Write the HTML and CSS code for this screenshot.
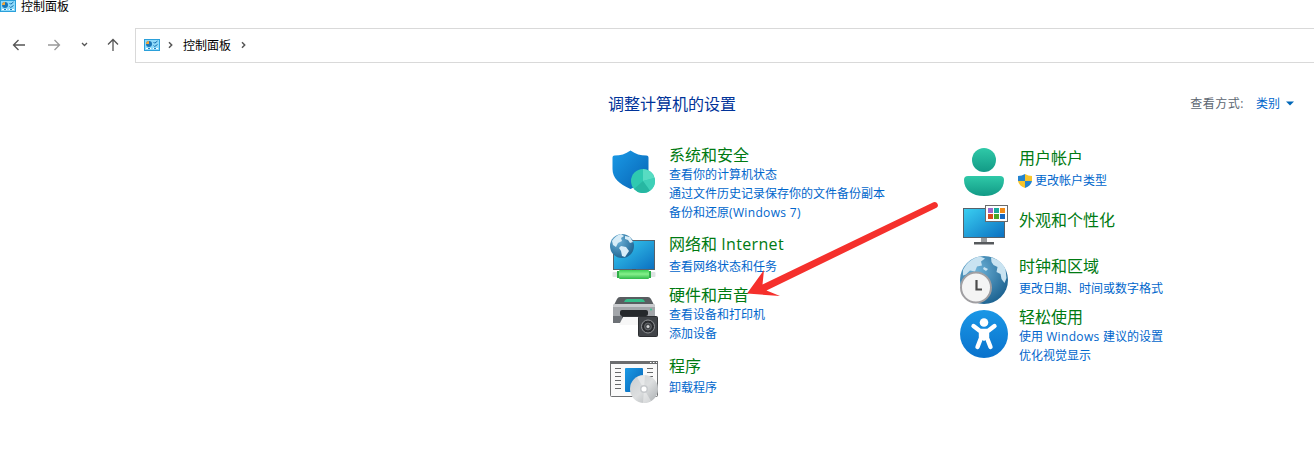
FILE: index.html
```html
<!DOCTYPE html>
<html lang="zh-CN">
<head>
    <meta charset="UTF-8">
    <meta name="viewport" content="width=device-width, initial-scale=1.0">
    <title>控制面板</title>
    <link rel="stylesheet" href="styles.css">
</head>
<body>
    <svg class="defs" width="0" height="0">
        <defs>
            <linearGradient id="blue" x1="0" y1="0" x2="1" y2="1">
                <stop offset="0" stop-color="#1a9ae6"/>
                <stop offset="1" stop-color="#0763b4"/>
            </linearGradient>
            <linearGradient id="round-blue" x1="0" y1="0" x2="0" y2="1">
                <stop offset="0" stop-color="#1a97e6"/>
                <stop offset="1" stop-color="#0a72cc"/>
            </linearGradient>
            <linearGradient id="screen" x1="0" y1="0" x2="1" y2="1">
                <stop offset="0" stop-color="#3ad0f2"/>
                <stop offset="1" stop-color="#0b6fc0"/>
            </linearGradient>
            <linearGradient id="teal" x1="0" y1="0" x2="0" y2="1">
                <stop offset="0" stop-color="#2fc9a8"/>
                <stop offset="1" stop-color="#129a86"/>
            </linearGradient>
            <linearGradient id="cable" x1="0" y1="0" x2="0" y2="1">
                <stop offset="0" stop-color="#3fce55"/>
                <stop offset=".45" stop-color="#86f08c"/>
                <stop offset="1" stop-color="#2fb94a"/>
            </linearGradient>
            <radialGradient id="globe" cx=".35" cy=".3" r=".75">
                <stop offset="0" stop-color="#6db2d8"/>
                <stop offset="1" stop-color="#1d6391"/>
            </radialGradient>
            <linearGradient id="disc" x1="0" y1="0" x2="1" y2="1">
                <stop offset="0" stop-color="#c9cdd0"/>
                <stop offset=".5" stop-color="#dddfe0"/>
                <stop offset="1" stop-color="#a9adb0"/>
            </linearGradient>
            <symbol id="panel" viewBox="0 0 16 12">
                <rect x=".5" y=".5" width="15" height="11" fill="#8fdafa" stroke="#2ba0da"/>
                <circle cx="5" cy="5" r="3" fill="#1976b8"/>
                <path d="M5 5V2a3 3 0 0 0-3 3z" fill="#f3a73b"/>
                <path d="M9.500 3l1.200 1.200L13.500 2M9.500 6.500l1.200 1L13.500 5.500" fill="none" stroke="#176fae"/>
                <path d="M2 9.500h5M9 9.500h5" stroke="#fff"/>
                <path d="M4 9.500h2M10 9.500h2" stroke="#1b83c4"/>
            </symbol>
        </defs>
    </svg>

    <header class="title-bar">
        <svg class="panel-icon" width="16" height="12"><use href="#panel"/></svg>
        <span>控制面板</span>
    </header>

    <div class="toolbar">
        <nav class="nav-buttons">
            <svg width="14" height="14" viewBox="0 0 14 14"><path d="M13 7H1.500M6.500 2l-5 5 5 5"/></svg>
            <svg class="disabled" width="14" height="14" viewBox="0 0 14 14"><path d="M1 7h11.500M7.500 2l5 5-5 5"/></svg>
            <svg class="recent" width="7" height="5" viewBox="0 0 7 5"><path d="M1 1l2.500 2.500L6 1"/></svg>
            <svg class="up" width="14" height="14" viewBox="0 0 14 14"><path d="M7 13V1.500M2 6.500l5-5 5 5"/></svg>
        </nav>
        <div class="address">
            <svg width="16" height="12"><use href="#panel"/></svg>
            <svg class="chevron" width="5" height="8" viewBox="0 0 5 8"><path d="M1 1.300L3.700 4 1 6.700"/></svg>
            <span>控制面板</span>
            <svg class="chevron last" width="5" height="8" viewBox="0 0 5 8"><path d="M1 1.300L3.700 4 1 6.700"/></svg>
        </div>
    </div>

    <main class="content">
        <div class="heading-row">
            <h1>调整计算机的设置</h1>
            <div class="view-by">
                <span class="view-label">查看方式:</span>
                <a class="view-mode">类别</a>
                <svg width="8" height="5" viewBox="0 0 8 5"><path d="M0 .500h8L4 4.500z" fill="#0067b8"/></svg>
            </div>
        </div>

        <div class="categories">
            <div class="column">
                <section class="category system">
                    <svg class="icon" viewBox="0 0 48 48">
                        <path d="M20.500 2.500c5 3.700 10 5 16 5q2 0 2 2V21c0 9-6 15-18 20C9 36 2.500 30 2.500 21V9.500q0-2 2-2c6 0 11-1.300 16-5z" fill="url(#blue)"/>
                        <circle cx="33" cy="33" r="12" fill="#2fc9b0"/>
                        <path d="M33 21a12 12 0 0 1 11.500 9L33 33z" fill="#58dcc2"/>
                        <path d="M33 33l11.500-3A12 12 0 0 1 40 42.700z" fill="#3fd0b8"/>
                        <path d="M33 33l7 9.700A12 12 0 0 1 24 41z" fill="#27b7a2"/>
                    </svg>
                    <div class="text">
                        <h2>系统和安全</h2>
                        <a>查看你的计算机状态</a>
                        <a>通过文件历史记录保存你的文件备份副本</a>
                        <a>备份和还原<span class="latin">(Windows 7)</span></a>
                    </div>
                </section>

                <section class="category network">
                    <svg class="icon" viewBox="0 0 48 48">
                        <rect x="3.500" y="7.500" width="41" height="29" fill="url(#screen)" stroke="#56616a"/>
                        <path d="M24 36v3" stroke="#555" stroke-width="4"/>
                        <rect x="2.500" y="39" width="43" height="5" rx="1" fill="#dfe3e3"/>
                        <rect x="7" y="38" width="34" height="7" fill="#2fae48"/>
                        <rect x="9" y="37" width="30" height="9" rx="1" fill="url(#cable)"/>
                        <circle cx="12" cy="13" r="12" fill="url(#globe)"/>
                        <path d="M2 8c2-3 5-6 9-7l3 2-3 2 1 3-4 2-2 4-3-2zM15 3l5 1 3 5-3 1-2-3-3-1zM11 13l5 1 3 4-4 6-3-1-1-5-2-3z" fill="#d8edf8"/>
                    </svg>
                    <div class="text">
                        <h2>网络和 <span class="latin">Internet</span></h2>
                        <a>查看网络状态和任务</a>
                    </div>
                </section>

                <section class="category hardware">
                    <svg class="icon" viewBox="0 0 48 48">
                        <path d="M10 5h28q2 0 3 2l4 8H3l4-8q1-2 3-2z" fill="#595d61"/>
                        <path d="M17 7h15q2 0 3 3H14q1-3 3-3z" fill="#36bd8a"/>
                        <path d="M3 14q0-2 2-2h38q2 0 2 2v17H3z" fill="#a3a6aa"/>
                        <path d="M3 14q0-2 2-2h38q2 0 2 2v1H3z" fill="#c9cbce"/>
                        <path d="M3 24h42v7H3z" fill="#6d7176"/>
                        <rect x="10" y="18" width="28" height="6" rx="2" fill="#25282b"/>
                        <path d="M12 24h24v6H12z" fill="#34373b"/>
                        <path d="M13 25h22v8H9z" fill="#f7f7f7"/>
                        <circle cx="41" cy="17.500" r="1" fill="#35c88e"/>
                        <rect x="28.500" y="24.500" width="19" height="20" rx="1" fill="#414448" stroke="#2c2e31"/>
                        <circle cx="38" cy="34.500" r="6.500" fill="#292b2e" stroke="#929497"/>
                        <circle cx="38" cy="34.500" r="3.500" fill="#45484b" stroke="#77797c" stroke-width=".7"/>
                        <circle cx="38" cy="34.500" r="1.500" fill="#d5d6d8"/>
                    </svg>
                    <div class="text">
                        <h2>硬件和声音</h2>
                        <a>查看设备和打印机</a>
                        <a>添加设备</a>
                    </div>
                </section>

                <section class="category programs">
                    <svg class="icon" viewBox="0 0 48 48">
                        <rect x=".5" y="4.500" width="47" height="35" rx="1" fill="#fafafa" stroke="#6f7173"/>
                        <path d="M0 4h48v3H0z" fill="#6b6d6f"/>
                        <path d="M40 5.500h1.500M43 5.500h1.500M46 5.500h1" stroke="#fff"/>
                        <path d="M5 11.500h6M5 15.500h6M5 19.500h6M5 23.500h6M5 27.500h6M5 31.500h6M37 11.500h6M37 15.500h6M37 19.500h6" stroke="#67696b"/>
                        <rect x="15" y="11" width="18" height="24" rx="1" fill="url(#blue)"/>
                        <circle cx="34" cy="32" r="14" fill="url(#disc)"/>
                        <path d="M34 32L27 20a14 14 0 0 1 8-2zM34 32l7 12a14 14 0 0 1-8 2z" fill="#fff" opacity=".4"/>
                        <circle cx="34" cy="32" r="4" fill="#c6c9cc"/>
                        <circle cx="34" cy="32" r="2.500" fill="#fff"/>
                    </svg>
                    <div class="text">
                        <h2>程序</h2>
                        <a>卸载程序</a>
                    </div>
                </section>
            </div>

            <div class="column">
                <section class="category user">
                    <svg class="icon" viewBox="0 0 48 48">
                        <circle cx="24" cy="12" r="12" fill="url(#teal)"/>
                        <path d="M8 28h32q4 0 4 4c0 10-8 16-20 16S4 42 4 32q0-4 4-4z" fill="url(#teal)"/>
                    </svg>
                    <div class="text">
                        <h2>用户帐户</h2>
                        <a class="with-shield">
                            <svg width="14" height="14" viewBox="0 0 14 14">
                                <path d="M7 0v7H0V2q4 0 7-2zM7 7h7q-1 5-7 7z" fill="#2484cf"/>
                                <path d="M7 0q3 2 7 2v5H7zM7 7v7Q1 12 0 7z" fill="#f8c52c"/>
                            </svg>
                            更改帐户类型
                        </a>
                    </div>
                </section>

                <section class="category appearance">
                    <svg class="icon" viewBox="0 0 48 48">
                        <path d="M21 36h6v6h-6z" fill="#9a9da0"/>
                        <path d="M14 41h20v2.500H14z" fill="#56595c"/>
                        <rect x="3.500" y="7.500" width="41" height="29" fill="url(#screen)" stroke="#56616a"/>
                        <rect x="25.500" y="4.500" width="22" height="16" fill="#fff" stroke="#696b6d"/>
                        <path d="M28 7h5v5h-5z" fill="#9a68cf"/>
                        <path d="M34 7h5v5h-5z" fill="#1aa99b"/>
                        <path d="M40 7h5v5h-5z" fill="#f18a16"/>
                        <path d="M28 13h5v5h-5z" fill="#d64b1d"/>
                        <path d="M34 13h5v5h-5z" fill="#4aa625"/>
                        <path d="M40 13h5v5h-5z" fill="#1769c1"/>
                    </svg>
                    <div class="text">
                        <h2>外观和个性化</h2>
                    </div>
                </section>

                <section class="category clock">
                    <svg class="icon" viewBox="0 0 48 48">
                        <circle cx="24" cy="24" r="24" fill="url(#globe)"/>
                        <path d="M3 14C7 6 14 1 20 .5l5 2-4 3 1 4-5 1-2 5-5-1-4 4-3 1zM31 1.500c7 1.500 12 6 14.500 11.500l1 9-2 5-3-4-1-5-4-2 1-5-4-2-2-3zM24 11l4 2-2 2-3-2z" fill="#c9e3f1"/>
                        <circle cx="16" cy="31.500" r="15" fill="#f4f4f4" stroke="#a09fa2" stroke-width="2"/>
                        <path d="M16.500 24v9.500H22" fill="none" stroke="#4b4b4b" stroke-width="2.200"/>
                    </svg>
                    <div class="text">
                        <h2>时钟和区域</h2>
                        <a>更改日期、时间或数字格式</a>
                    </div>
                </section>

                <section class="category ease">
                    <svg class="icon" viewBox="0 0 48 48">
                        <circle cx="24" cy="24" r="24" fill="url(#round-blue)"/>
                        <circle cx="24" cy="12.500" r="4.300" fill="#fff"/>
                        <path d="M13.500 16l6.500 5h8l6.500-5M21 21v7l-3.500 9M27 21v7l3.500 9" fill="none" stroke="#fff" stroke-width="4.400" stroke-linecap="round" stroke-linejoin="round"/>
                        <path d="M19 19h10v9l-5 3-5-3z" fill="#fff"/>
                    </svg>
                    <div class="text">
                        <h2>轻松使用</h2>
                        <a>使用 <span class="latin">Windows </span>建议的设置</a>
                        <a>优化视觉显示</a>
                    </div>
                </section>
            </div>
        </div>
    </main>

    <svg class="arrow" width="194" height="98" viewBox="0 0 194 98">
        <path d="M1 93.500L18 70l-1.500 14.500L187.500 2.200a3.200 3.200 0 0 1 3 5.600L20.500 90.500 34 96z" fill="#f5302c"/>
    </svg>
</body>
</html>
```

FILE: styles.css
```css
body {
    margin: 0;
    height: 474px;
    position: relative;
    overflow: hidden;
    background: #fff;
    color: #000;
    font-family: "Open Sans", "Noto Sans CJK SC", sans-serif;
    font-size: 12px;
}

svg {
    display: block;
    flex-shrink: 0;
}

.defs {
    position: absolute;
}

/* 标题栏 */
.title-bar {
    display: flex;
    align-items: center;
    gap: 5px;
    height: 14px;
    margin-bottom: 14px;
    line-height: 14px;
}

.panel-icon {
    margin-top: -3px;
}

/* 导航和地址栏 */
.toolbar {
    display: flex;
    height: 35px;
}

.nav-buttons {
    display: flex;
    align-items: center;
    width: 123px;
    height: 33px;
    padding-left: 12px;
}

.nav-buttons path,
.chevron path {
    fill: none;
    stroke: #555;
    stroke-width: 1.3;
}

.nav-buttons .disabled {
    margin-left: 21px;
}

.nav-buttons .disabled path {
    stroke: #999;
}

.nav-buttons .recent {
    margin-left: 20px;
}

.nav-buttons .up {
    margin-left: 18px;
}

.address {
    display: flex;
    flex: 1;
    align-items: center;
    box-sizing: border-box;
    padding: 0 0 2px 8px;
    border: 1px solid #d9d9d9;
    border-right: none;
}

.address .chevron {
    margin: 1px 10px 0 8px;
}

.address .chevron path {
    stroke-width: 1.5;
}

.address .last {
    margin-left: 10px;
}

/* 主内容 */
.content {
    padding-left: 608px;
}

.heading-row {
    display: flex;
    justify-content: space-between;
    padding: 29px 20px 0 0;
    height: 53px;
}

h1,
h2 {
    margin: 0;
    font-size: 16px;
    font-weight: normal;
}

h1 {
    color: #003399;
    line-height: 24px;
}

.view-by {
    display: flex;
    align-items: center;
    height: 22px;
    color: #5c6670;
}

.view-label {
    letter-spacing: 0.5px;
}

.view-mode {
    margin: 0 6px 0 12px;
}

a {
    color: #0066cc;
}

.latin {
    letter-spacing: 0.35px;
}

.categories {
    display: flex;
}

.column {
    width: 350px;
}

.category {
    display: flex;
    gap: 11px;
    padding-left: 2px;
}

.icon {
    width: 48px;
    height: 48px;
}

.text {
    display: flex;
    flex-direction: column;
    white-space: nowrap;
}

.text h2 {
    color: #007a12;
    line-height: 20px;
}

.text a {
    line-height: 19px;
}

.text .with-shield {
    display: flex;
    align-items: center;
    gap: 3px;
    margin-left: -1px;
}

.system {
    height: 88px;
}

.system .icon {
    margin-top: 3px;
}

.network {
    height: 52px;
}

.network .text {
    padding-top: 1px;
}

.network h2,
.user h2 {
    margin-bottom: 3px;
}

.hardware {
    height: 70px;
}

.hardware .icon {
    margin-top: 7px;
}

.programs .icon {
    margin-top: 2px;
}

.programs .text {
    padding-top: 1px;
}

.programs h2 {
    margin-bottom: 2px;
}

.user {
    height: 55px;
}

.user .icon,
.user .text {
    margin-top: 3px;
}

.appearance {
    height: 56px;
}

.appearance .icon {
    margin-top: 1px;
}

.appearance .text {
    padding-top: 10px;
}

.clock {
    height: 51px;
}

.clock h2 {
    margin-bottom: 3px;
}

.ease .icon {
    margin-top: 3px;
}

/* 指向“硬件和声音”的箭头 */
.arrow {
    position: absolute;
    left: 746px;
    top: 200px;
}
```
